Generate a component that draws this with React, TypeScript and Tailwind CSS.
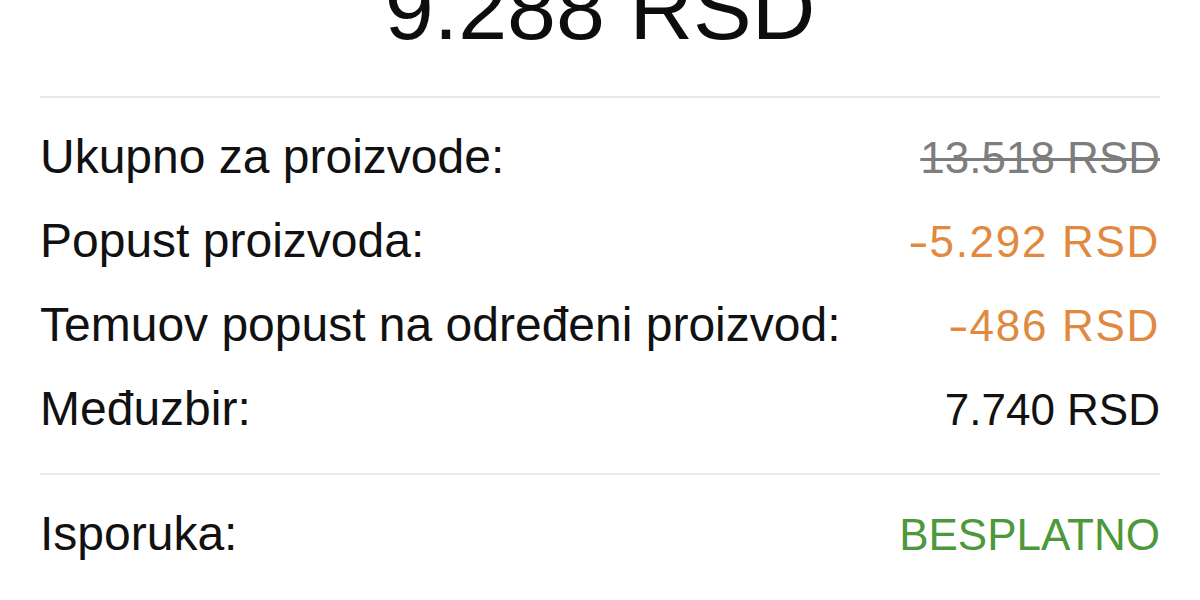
const rows = [
  { label: 'Ukupno za proizvode:', value: '13.518 RSD', tone: 'strike' },
  { label: 'Popust proizvoda:', value: '5.292 RSD', tone: 'discount' },
  { label: 'Temuov popust na određeni proizvod:', value: '486 RSD', tone: 'discount' },
  { label: 'Međuzbir:', value: '7.740 RSD', tone: 'plain' },
];

const toneClass: Record<string, string> = {
  strike: 'text-[#7d7d7d] line-through decoration-[3px] decoration-[#7d7d7d]',
  discount: 'text-[#e0893f] tracking-[1.7px]',
  plain: 'text-[#111111]',
  free: 'text-[#4c983a]',
};

function Row({ label, value, tone }: { label: string; value: string; tone: string }) {
  return (
    <div className="flex justify-between items-baseline h-[84px] pt-[35px]">
      <span className="text-[48px] leading-none text-[#111111]">{label}</span>
      <span className={`text-[44px] leading-none ${toneClass[tone]}`}>
        {tone === 'discount' && <span className="inline-block mr-[5px] scale-x-[1.4] origin-left">-</span>}
        {value}
      </span>
    </div>
  );
}

export default function App() {
  return (
    <div className="w-[1200px] h-[600px] bg-white overflow-hidden px-10 font-['Liberation_Sans',Arial,sans-serif]">
      {/* Total */}
      <div className="h-[96px] flex flex-col">
        <h1 className="mt-[-35px] text-center text-[88px] leading-none text-[#0d0d0d] font-normal">9.288 RSD</h1>
      </div>
      <div className="h-[2px] bg-[#e9e9e9]"></div>

      {rows.map((r) => (
        <Row key={r.label} {...r} />
      ))}

      <div className="h-[2px] bg-[#e9e9e9] mt-[39px]"></div>
      <Row label="Isporuka:" value="BESPLATNO" tone="free" />
    </div>
  );
}
